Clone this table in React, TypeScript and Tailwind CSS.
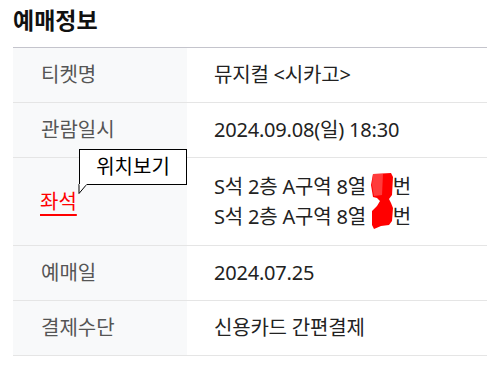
import React from "react";

type Row = {
    label: string;
    values: string[];
};

const rows: Row[] = [
    { label: "티켓명", values: ["뮤지컬 <시카고>"] },
    { label: "관람일시", values: ["2024.09.08(일) 18:30"] },
    { label: "좌석", values: ["S석 2층 A구역 8열", "S석 2층 A구역 8열"] },
    { label: "예매일", values: ["2024.07.25"] },
    { label: "결제수단", values: ["신용카드 간편결제"] },
];

const font = { fontFamily: '"Noto Sans", "Noto Sans CJK KR", sans-serif' };

const SeatLabel: React.FC = () => (
    <div className="relative flex h-full items-center pl-[27px]">
        <span className="text-[20px] text-[#ff0000] underline decoration-2 underline-offset-[5px]">좌석</span>
        {/* 위치보기 tooltip */}
        <div className="absolute left-[66px] top-[-9px] flex h-[36px] w-[108px] items-center justify-center border border-black bg-white text-[20px] text-black">
            위치보기
            <svg className="absolute left-[-2px] top-[34px]" width="12" height="12" viewBox="0 0 12 12">
                <path d="M1 0 L1 9.5 L9 0" fill="white" stroke="black" strokeWidth="1" />
                <rect x="1.5" y="0" width="7" height="1.2" fill="white" />
            </svg>
        </div>
    </div>
);

const Blob: React.FC = () => (
    <svg className="absolute left-0 top-[1px]" width="24" height="57" viewBox="0 0 24 57">
        <path
            d="M2,1 L20,0 L22,4 L21,22 L18,26 L20,30 L22,35 L21,48 L18,52 L10,53 L3,56 L1,52 L1,38 L6,33 L9,28 L6,25 L2,24 L0,12 Z"
            fill="#ff0000"
        />
        <path d="M2,1 L12,1 L11,22 L3,23 L1,12 Z" fill="#ff3b3b" />
    </svg>
);

export default function App() {
    return (
        <div className="bg-white pl-[13px]" style={font}>
            <h2 className="flex h-[47px] items-start pt-[5px] text-[23px] font-bold leading-[30px] text-[#111]">예매정보</h2>
            <div className="border-t border-[#c4c4cc]">
                {rows.map((row) => {
                    const seat = row.label === "좌석";
                    return (
                        <div
                            key={row.label}
                            className={`grid grid-cols-[174px_1fr] border-b border-[#e5e5e5] ${seat ? "h-[88px]" : "h-[55px]"}`}
                        >
                            <div className="bg-[#f8f9fa]">
                                {seat ? (
                                    <SeatLabel />
                                ) : (
                                    <div className="flex h-full items-center pl-[28px] text-[20px] text-[#555]">{row.label}</div>
                                )}
                            </div>
                            <div className="flex h-full flex-col justify-center pl-[27px] text-[20px] tracking-[-0.2px] text-[#222]">
                                {seat ? (
                                    row.values.map((v, i) => (
                                        <div key={i} className="leading-[30px]">
                                            {v}{" "}
                                            <span className="relative inline-block w-[22px] align-top">
                                                &nbsp;
                                                {i === 0 && <Blob />}
                                            </span>
                                            번
                                        </div>
                                    ))
                                ) : (
                                    <div className="leading-[30px]">{row.values[0]}</div>
                                )}
                            </div>
                        </div>
                    );
                })}
            </div>
        </div>
    );
}
